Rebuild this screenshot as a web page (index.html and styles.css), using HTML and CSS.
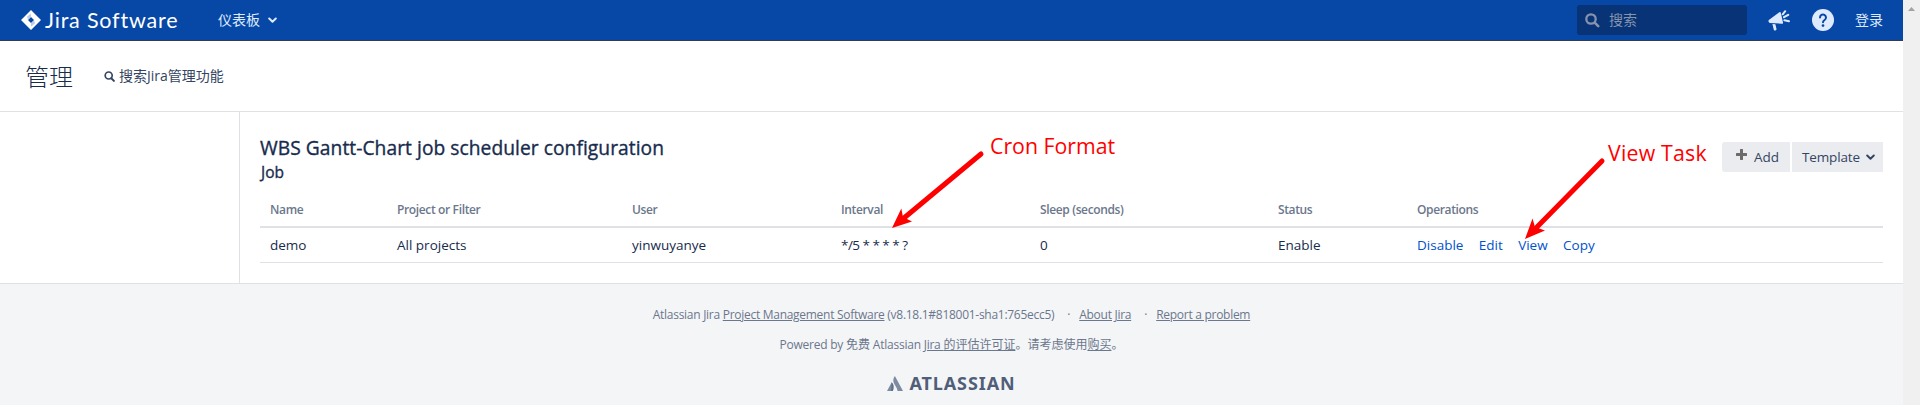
FILE: index.html
```html
<!DOCTYPE html>
<html lang="zh-CN">
<head>
<meta charset="utf-8">
<title>WBS Gantt-Chart job scheduler configuration</title>
<link rel="stylesheet" href="styles.css">
</head>
<body>
<div class="window">
  <div class="page">
    <header class="topbar">
      <a class="logo">
        <svg width="20" height="20" viewBox="0 0 20 20"><path fill="#fff" fill-rule="evenodd" d="M10 0 20 10 10 20 0 10ZM10 7 7 10 10 13 13 10Z"/><path fill="#8fabd9" d="M10 3.500 6 6.500 7 10 10 7ZM10 16.500l4-3L13 10 10 13Z" opacity=".6"/></svg>
        <span class="logo-text">Jira Software</span>
      </a>
      <a class="nav-item">仪表板
        <svg class="chevron" width="9" height="7" viewBox="0 0 9 7"><path d="M1.200 1.500 4.500 4.700 7.800 1.500" fill="none" stroke="currentColor" stroke-width="2" stroke-linecap="round" stroke-linejoin="round"/></svg>
      </a>
      <div class="search">
        <svg width="15" height="15" viewBox="0 0 15 15"><g fill="none" stroke="currentColor"><circle cx="6" cy="6" r="4.700" stroke-width="2.300"/><path d="m9.700 9.700 3.500 3.500" stroke-width="2.600" stroke-linecap="round"/></g></svg>
        <span>搜索</span>
      </div>
      <svg class="feedback" width="22" height="21" viewBox="0 0 22 21"><path fill="#deebff" d="M11.300 2.300a1 1 0 0 1 1.500.4L15 12.500a1 1 0 0 1-1.200 1.200L1.900 12.900C.2 12.500 0 10.400 1.200 9.700ZM4.400 14l3 .2 1.100 4.900a1.400 1.400 0 0 1-2.700.6Z"/><path d="m14.700 4.300 2.500-3.100M16 7.200l4.200-2.400M16.400 10.300l4.600.9" fill="none" stroke="#deebff" stroke-width="2" stroke-linecap="round"/></svg>
      <svg class="help" width="22" height="22" viewBox="0 0 22 22"><circle cx="11" cy="11" r="11" fill="#deebff"/><path d="M8 8.500a3 3 0 1 1 4.600 2.500c-1 .7-1.600 1.100-1.600 2.300" fill="none" stroke="#0747a6" stroke-width="2" stroke-linecap="round"/><circle cx="11" cy="16.600" r="1.350" fill="#0747a6"/></svg>
      <a class="login">登录</a>
    </header>
    <section class="admin-header">
      <h1>管理</h1>
      <a class="admin-search">
        <svg width="11" height="11" viewBox="0 0 11 11"><g fill="none" stroke="currentColor"><circle cx="4.700" cy="4.500" r="3.500" stroke-width="1.700"/><path d="m7.300 7.200 2.600 2.700" stroke-width="2" stroke-linecap="round"/></g></svg>
        <span>搜索Jira管理功能</span>
      </a>
    </section>
    <div class="body">
      <aside class="sidebar"></aside>
      <main class="content">
        <div class="heading">
          <div>
            <h2>WBS Gantt-Chart job scheduler configuration</h2>
            <h3>Job</h3>
          </div>
          <div class="buttons">
            <button class="btn add"><svg width="11" height="11" viewBox="0 0 11 11"><path d="M5.500 1v9M1 5.500h9" stroke="#6b6b6b" stroke-width="3" stroke-linecap="round"/></svg><span>Add</span></button>
            <button class="btn template"><span>Template</span><svg width="9" height="7" viewBox="0 0 9 7"><path d="M1.200 1.500 4.500 4.700 7.800 1.500" fill="none" stroke="currentColor" stroke-width="2" stroke-linecap="round" stroke-linejoin="round"/></svg></button>
          </div>
        </div>
        <table class="jobs">
          <colgroup><col class="c-name"><col class="c-project"><col class="c-user"><col class="c-interval"><col class="c-sleep"><col class="c-status"><col></colgroup>
          <thead><tr><th>Name</th><th>Project or Filter</th><th>User</th><th>Interval</th><th>Sleep (seconds)</th><th>Status</th><th>Operations</th></tr></thead>
          <tbody><tr><td>demo</td><td>All projects</td><td>yinwuyanye</td><td class="cron-value">*/5 * * * * ?</td><td>0</td><td>Enable</td><td><div class="ops"><a>Disable</a><a>Edit</a><a>View</a><a>Copy</a></div></td></tr></tbody>
        </table>
      </main>
    </div>
    <footer class="footer">
      <p class="version"><span>Atlassian Jira <u>Project Management Software</u> (v8.18.1#818001-sha1:765ecc5)</span><i>·</i><u>About Jira</u><i>·</i><u>Report a problem</u></p>
      <p class="license"><span>Powered by </span>免费<span> Atlassian<u> Jira </u></span><u>的评估许可证</u>。请考虑使用<u>购买</u>。</p>
      <div class="atlassian">
        <svg width="16" height="15" viewBox="0 0 16 15"><path fill="#7e8ca1" d="M7.900 0 16 15h-5.400C10 10.500 6.300 8 6.300 4.400 6.300 2.700 7 1.200 7.900 0Z"/><path fill="#7e8ca1" d="M4.700 6.300 6.500 9 6 15H0Z"/><path fill="#5d6e88" d="M4.700 6.300C6.800 8.500 7 12 5.900 15H4.200Z"/></svg>
        <span>ATLASSIAN</span>
      </div>
    </footer>
  </div>
  <div class="scrollbar"><svg width="7" height="4" viewBox="0 0 7 4"><path d="M3.500 0 7 4H0Z" fill="#a3a3a3"/></svg></div>
  <svg class="arrows" width="1920" height="405" viewBox="0 0 1920 405">
    <g fill="#f00" stroke="#f00"><path d="M981 154 904 218" stroke-width="5" stroke-linecap="round"/><path stroke="none" d="m892 228 9.300-19.500 1.700 8.500 9 4.500Z"/>
    <path d="M1602 161 1537 227" stroke-width="5" stroke-linecap="round"/><path stroke="none" d="m1525 239 7.500-20.500 2.500 8.500 10 3.500Z"/></g>
  </svg>
  <span class="note cron">Cron Format</span>
  <span class="note task">View Task</span>
</div>
</body>
</html>
```
FILE: styles.css
```css
* { box-sizing: border-box; }
body {
  margin: 0;
  overflow: hidden;
  background: #fff;
  color: #172b4d;
  font: 13.5px/20px "Open Sans", "Noto Sans CJK SC", sans-serif;
}
h1, h2, h3, p { margin: 0; }
svg { display: block; flex: none; }
.window { position: relative; display: flex; width: 1920px; height: 405px; }
.page { display: flex; flex-direction: column; width: 1903px; }
.scrollbar { flex: 1; background: #f0f0f0; padding: 7px 0 0 5px; }

.topbar {
  display: flex;
  align-items: center;
  height: 41px;
  padding: 0 20px 0 21px;
  background: #0747a6;
  border-bottom: 1px solid #2e3d54;
  color: #deebff;
}
.logo { display: flex; align-items: center; gap: 4px; width: 197px; color: #fff; }
.logo-text { margin-top: -1px; font: 21.5px/24px Lato, sans-serif; white-space: nowrap; letter-spacing: .8px; }
.nav-item { display: flex; align-items: center; gap: 8px; font-size: 14px; }
.search {
  display: flex;
  align-items: center;
  gap: 9px;
  width: 170px;
  height: 30px;
  margin-left: auto;
  padding-left: 8px;
  border-radius: 3px;
  background: #083376;
  color: #8494ad;
  font-size: 14px;
}
.feedback { margin-left: 21px; }
.help { margin: 0 21px 0 22px; }
.login { font-size: 14px; }

.admin-header {
  display: flex;
  align-items: center;
  height: 71px;
  padding-left: 25px;
  border-bottom: 1px solid #dfe1e5;
}
h1 { width: 79px; padding-top: 2px; font-size: 24px; font-weight: 300; line-height: 30px; }
.admin-search { display: flex; align-items: center; gap: 4px; color: #344563; font-size: 14px; }

.body { display: flex; height: 171px; }
.sidebar { width: 240px; border-right: 1px solid #dfe1e5; }
.content { flex: 1; padding: 24px 20px 0; }
.heading { display: flex; justify-content: space-between; height: 64px; }
h2, h3 { font-weight: 500; -webkit-text-stroke: .35px currentColor; }
h2 { font-size: 19.2px; line-height: 24px; letter-spacing: .06px; white-space: nowrap; }
h3 { font-size: 15.5px; line-height: 20px; padding: 2px 0 0 1px; }
.buttons { display: flex; gap: 2px; padding-top: 6px; }
.btn {
  display: flex;
  align-items: center;
  height: 30px;
  padding: 0 0 0 10px;
  border: 0;
  background: #ebecf0;
  color: #344563;
  font: inherit;
}
.add { width: 68px; padding-left: 14px; gap: 7px; border-radius: 3px 0 0 3px; }
.add svg { margin-top: -5px; }
.template { width: 91px; gap: 6px; letter-spacing: -.15px; }

.jobs { width: 1623px; table-layout: fixed; border-collapse: collapse; text-align: left; }
.c-name { width: 127px; }
.c-project { width: 235px; }
.c-user { width: 209px; }
.c-interval { width: 199px; }
.c-sleep { width: 238px; }
.c-status { width: 139px; }
th { padding: 0 10px 6px; border-bottom: 2px solid #dfe1e6; color: #6b778c; font-size: 12px; font-weight: 600; letter-spacing: -.36px; }
td { height: 35px; padding: 0 10px; border-bottom: 1px solid #dfe1e6; }
.cron-value { letter-spacing: -.52px; }
.ops { display: flex; gap: 15.4px; color: #0052cc; }

.footer {
  flex: 1;
  border-top: 1px solid #dfe1e5;
  padding-top: 21px;
  background: #f4f5f7;
  color: #6b778c;
  font-size: 12px;
}
.version, .license { display: flex; justify-content: center; height: 20px; white-space: pre; }
.version { margin-bottom: 10px; letter-spacing: -.28px; }
.license span { letter-spacing: -.24px; }
.version i { width: 25px; padding-left: 13px; font-style: normal; }
.atlassian { display: flex; align-items: center; justify-content: center; gap: 6px; height: 20px; margin-top: 18px; color: #505f79; font: 700 18px/20px "Noto Sans", sans-serif; letter-spacing: .9px; }

.arrows { position: absolute; top: 0; left: 0; }
.note { position: absolute; color: #f00; font-size: 21.3px; line-height: 28px; white-space: nowrap; }
.cron { top: 132px; left: 990px; }
.task { top: 139px; left: 1608px; letter-spacing: .2px; }
```
